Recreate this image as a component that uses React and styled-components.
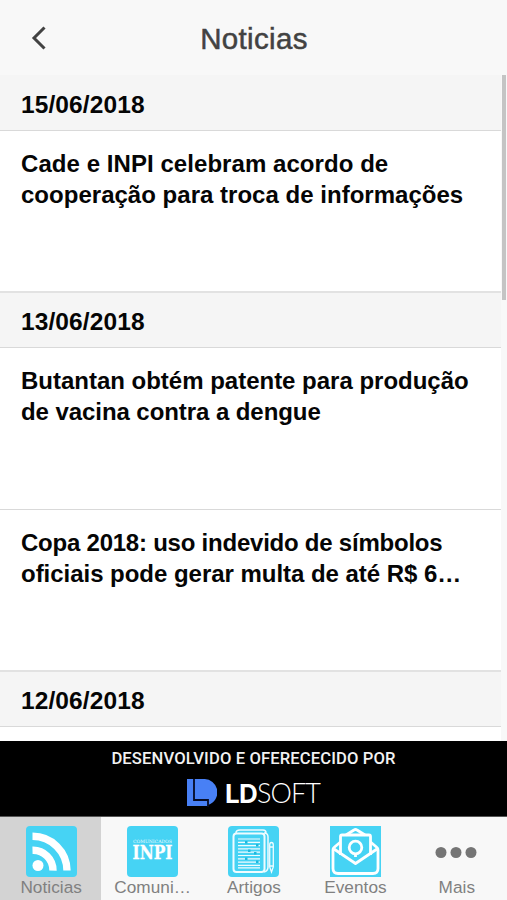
import React from "react";
import styled, { createGlobalStyle } from "styled-components";

const GlobalStyle = createGlobalStyle`
  * {
    box-sizing: border-box;
  }
  body {
    margin: 0;
    background-color: #f8f8f8;
    font-family: "Liberation Sans", Arial, sans-serif;
  }
  button {
    padding: 0;
    border: 0;
    background: none;
    font: inherit;
    cursor: pointer;
  }
`;

const Screen = styled.div`
  display: flex;
  flex-direction: column;
  width: 507px;
  height: 900px;
  overflow: hidden;
`;

const Header = styled.header`
  display: grid;
  grid-template-columns: 78px 1fr 78px;
  align-items: center;
  flex: 0 0 75px;
  background-color: #f8f8f8;
`;

const BackButton = styled.button`
  display: flex;
  justify-content: center;
  padding-top: 1px;
`;

const Title = styled.h1`
  margin: 0;
  padding: 3px 0 0 1px;
  color: #424242;
  font-size: 29.5px;
  font-weight: normal;
  line-height: 34px;
  text-align: center;
  letter-spacing: 0.35px;
  -webkit-text-stroke: 0.5px #424242;
`;

const Content = styled.main`
  display: grid;
  grid-template-columns: 501px 6px;
  flex: 0 0 666px;
  overflow: hidden;
`;

const NewsList = styled.div`
  height: 666px;
  overflow: hidden;
  background-color: #fff;
`;

const ScrollTrack = styled.div`
  padding: 0 1px;
  background-color: #f8f8f8;
`;

const ScrollThumb = styled.div`
  height: 225px;
  background-color: #c4c4c4;
`;

const DateRow = styled.h2`
  height: ${(props) => (props.$first ? 56 : 57)}px;
  margin: 0;
  padding: ${(props) => (props.$first ? 15 : 14)}px 21px 0;
  border-top: ${(props) => (props.$first ? 0 : 2)}px solid #e2e2e2;
  border-bottom: 1px solid #d9d9d9;
  background-color: #f5f5f5;
  color: #050505;
  font-size: 24.5px;
  line-height: 30px;
  letter-spacing: 0.1px;
`;

const NewsItem = styled.article`
  height: ${(props) => props.$height}px;
  padding: 18px 21px 0;
  border-top: ${(props) => (props.$divided ? 1 : 0)}px solid #d9d9d9;
`;

const Headline = styled.h3`
  margin: 0;
  color: #050505;
  font-size: 24px;
  line-height: 30.6px;
`;

const HeadlineLine = styled.span`
  display: block;
  white-space: nowrap;
  letter-spacing: ${(props) => props.$spacing}px;
`;

const Sponsor = styled.section`
  display: flex;
  flex-direction: column;
  align-items: center;
  flex: 0 0 76px;
  padding-top: 8px;
  border-bottom: 1px solid #555;
  background-color: #000;
`;

const SponsorText = styled.p`
  margin: 0;
  color: #f2f2f2;
  font: 500 16.6px/20px Roboto, sans-serif;
  letter-spacing: 0.12px;
  white-space: nowrap;
`;

const Logo = styled.div`
  display: flex;
  align-items: center;
  gap: 8px;
  margin-top: 9px;
`;

const LogoName = styled.span`
  padding-top: 1px;
  color: #fff;
  font: 300 27px/28px Lato, sans-serif;
  letter-spacing: -0.9px;
`;

const LogoStrong = styled.b`
  font: 700 26px/28px Inter, sans-serif;
  letter-spacing: -0.8px;
`;

const TabBar = styled.nav`
  display: grid;
  grid-template-columns: repeat(5, 1fr);
  flex: 0 0 83px;
  background-color: #f8f8f8;
`;

const Tab = styled.button`
  display: flex;
  flex-direction: column;
  align-items: center;
  padding-top: 8px;
  background-color: ${(props) => (props.$active ? "#d3d3d3" : "transparent")};
  color: #808080;
`;

const TabLabel = styled.span`
  padding-left: 1px;
  font-size: 17.2px;
  line-height: 20px;
  letter-spacing: 0.06px;
`;

const TabIcon = styled.svg`
  display: block;
  width: 52px;
  height: 52px;
  flex: none;
`;

const NewsIcon = () => (
  <TabIcon viewBox="0 0 52 52">
    <rect x="1" y="1" width="51" height="51" rx="4" fill="#46d3f4" />
    <circle cx="13" cy="40.5" r="5.5" fill="#fff" />
    <path
      d="M7.5 25.2A20 20 0 0 1 28 45.6M7.5 11.3A34.5 34.5 0 0 1 42 45.6"
      fill="none"
      stroke="#fff"
      strokeWidth="7.4"
    />
  </TabIcon>
);

const InpiIcon = () => (
  <TabIcon viewBox="0 0 52 52">
    <rect x="1" y="1" width="51" height="51" rx="4" fill="#46d3f4" />
    <g
      fill="#fff"
      fontFamily="'DejaVu Serif', 'Liberation Serif', serif"
      textAnchor="middle"
    >
      <text
        x="26.5"
        y="17.8"
        fontSize="4.4"
        textLength="39"
        lengthAdjust="spacingAndGlyphs"
        opacity="0.9"
      >
        COMUNICADOS
      </text>
      <text
        x="26.5"
        y="33.8"
        fontSize="18"
        fontWeight="bold"
        textLength="40"
        lengthAdjust="spacingAndGlyphs"
        stroke="#fff"
        strokeWidth="0.3"
      >
        INPI
      </text>
    </g>
  </TabIcon>
);

const ArticleIcon = () => (
  <TabIcon viewBox="0 0 52 52">
    <rect x="1" y="1" width="51" height="51" rx="4" fill="#46d3f4" />
    <g fill="none" stroke="#effcff">
      <path
        d="M9 8Q9 5 13 5H36Q39 5 39 8M37 8Q41 8 41 12V42Q41 46 37 47"
        strokeWidth="1.5"
      />
      <rect x="6.5" y="8.5" width="31" height="38.5" rx="3" strokeWidth="2" />
      <path
        d="M11 14H33M11 17.3H33M11 20.6H33M11 23.9H33M11 27.2H33M11 30.5H33M11 33.8H33M11 37.1H33M11 40.4H33M11 42.8H33"
        strokeWidth="1.2"
      />
      <path
        d="M42.7 20Q42.7 17.5 44.5 17.5T46.3 20V42L44.5 47L42.7 42ZM42.7 22H46.3M42.7 41H46.3"
        strokeWidth="1.3"
      />
    </g>
    <path
      d="M18 16h2.5v2.5h-2.5zM29 19h2.5v2.5h-2.5zM21 24.5h2.5v2.5h-2.5zM27 27h2.5v2.5h-2.5zM18 32.5h2.5v2.5h-2.5zM29 35.5h2.5v2.5h-2.5z"
      fill="#20b8dc"
    />
  </TabIcon>
);

const EventIcon = () => (
  <TabIcon viewBox="0 0 52 52">
    <rect x="1" y="1" width="51" height="51" fill="#46d3f4" />
    <g fill="none" stroke="#fff" strokeWidth="2.8" strokeLinejoin="round">
      <path d="M11.5 30V11.5Q11.5 10 13 10H40Q41.5 10 41.5 11.5V30" />
      <path d="M17 10L25 5Q26.5 4 28 5L36 10" />
      <path d="M11.5 17L5 22.5Q4 23.3 4 25V43.5Q4 48.5 9 48.5H44Q49 48.5 49 43.5V25Q49 23.3 48 22.5L41.5 17" />
      <path d="M5 24L26.5 38.5L48 24" />
      <circle cx="26.5" cy="22.5" r="6.3" strokeWidth="2.8" />
      <path d="M26.5 28V32" />
    </g>
  </TabIcon>
);

const MoreIcon = () => (
  <TabIcon viewBox="0 0 52 52">
    <g fill="#757575">
      <circle cx="11" cy="27.5" r="5.5" />
      <circle cx="26" cy="27.5" r="5.5" />
      <circle cx="41" cy="27.5" r="5.5" />
    </g>
  </TabIcon>
);

const days = [
  {
    date: "15/06/2018",
    items: [
      {
        lines: [
          { text: "Cade e INPI celebram acordo de", spacing: 0.06 },
          { text: "cooperação para troca de informações", spacing: 0.02 },
        ],
        height: 160,
      },
    ],
  },
  {
    date: "13/06/2018",
    items: [
      {
        lines: [
          { text: "Butantan obtém patente para produção", spacing: -0.01 },
          { text: "de vacina contra a dengue", spacing: -0.07 },
        ],
        height: 161,
      },
      {
        lines: [
          { text: "Copa 2018: uso indevido de símbolos", spacing: -0.23 },
          { text: "oficiais pode gerar multa de até R$ 6…", spacing: -0.03 },
        ],
        height: 161,
      },
    ],
  },
  { date: "12/06/2018", items: [] },
];

const tabs = [
  { label: "Noticias", Icon: NewsIcon },
  { label: "Comuni…", Icon: InpiIcon },
  { label: "Artigos", Icon: ArticleIcon },
  { label: "Eventos", Icon: EventIcon },
  { label: "Mais", Icon: MoreIcon },
];

const App = () => {
  const [active, setActive] = React.useState("Noticias");

  return (
    <>
      <GlobalStyle />
      <Screen>
        <Header>
          <BackButton aria-label="Voltar">
            <svg width="18" height="26" viewBox="0 0 18 26">
              <path
                d="M14.5 2.5L4 13L14.5 23.5"
                fill="none"
                stroke="#424242"
                strokeWidth="3"
              />
            </svg>
          </BackButton>
          <Title>{active}</Title>
        </Header>

        <Content>
          <NewsList>
            {days.map((day, dayIndex) => (
              <React.Fragment key={day.date}>
                <DateRow $first={dayIndex === 0}>{day.date}</DateRow>
                {day.items.map((item, index) => (
                  <NewsItem
                    key={item.lines[0].text}
                    $height={item.height}
                    $divided={index > 0}
                  >
                    <Headline>
                      {item.lines.map((line) => (
                        <HeadlineLine key={line.text} $spacing={line.spacing}>
                          {line.text}
                        </HeadlineLine>
                      ))}
                    </Headline>
                  </NewsItem>
                ))}
              </React.Fragment>
            ))}
          </NewsList>
          <ScrollTrack>
            <ScrollThumb />
          </ScrollTrack>
        </Content>

        <Sponsor>
          <SponsorText>DESENVOLVIDO E OFERECECIDO POR</SponsorText>
          <Logo>
            <svg width="30" height="28" viewBox="0 0 30 28">
              <path
                d="M0 0H16.5A13.3 13.3 0 0 1 21 26L20 27H0Z"
                fill="#4880f5"
              />
              <path
                d="M7 0V21H21V28"
                fill="none"
                stroke="#050b24"
                strokeWidth="1.8"
              />
            </svg>
            <LogoName>
              <LogoStrong>LD</LogoStrong>SOFT
            </LogoName>
          </Logo>
        </Sponsor>

        <TabBar>
          {tabs.map(({ label, Icon }) => (
            <Tab
              key={label}
              $active={label === active}
              onClick={() => setActive(label)}
            >
              <Icon />
              <TabLabel>{label}</TabLabel>
            </Tab>
          ))}
        </TabBar>
      </Screen>
    </>
  );
};

export default App;
